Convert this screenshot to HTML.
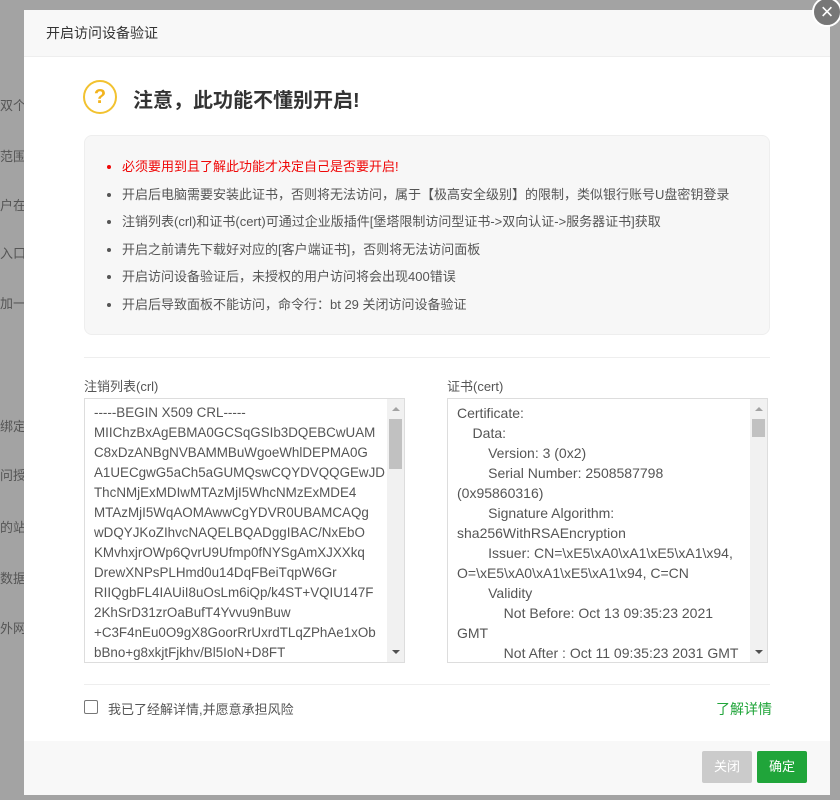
<!DOCTYPE html>
<html><head><meta charset="utf-8"><style>
*{margin:0;padding:0;box-sizing:border-box}
body{width:840px;height:800px;background:#a3a3a3;position:relative;overflow:hidden;font-family:"Liberation Sans","Noto Sans CJK SC",sans-serif;color:#555}
.bg{position:absolute;left:0;font-size:13px;color:#555}
.dlg{position:absolute;left:24px;top:10px;width:806px;height:785px;background:#fff}
.hd{height:47px;background:#f8f8f8;border-bottom:1px solid #eee;font-size:14px;color:#333;padding-left:22px;line-height:47px}
.x{position:absolute;left:788px;top:-13px;width:30px;height:30px;border-radius:50%;background:#777;border:2px solid #fff;color:#fff;font-size:22px;line-height:25px;text-align:center}
.ic{position:absolute;left:59px;top:70px;width:34px;height:34px;border:2px solid #f2c230;border-radius:50%;color:#f2b31c;font-size:20px;font-weight:bold;text-align:center;line-height:30px}
.h2{position:absolute;left:109px;top:74px;font-size:20px;font-weight:bold;color:#333}
.box{position:absolute;left:60px;top:125px;width:686px;height:200px;background:#f7f7f7;border:1px solid #eee;border-radius:8px}
.box ul{list-style:none;padding-top:20px}
.box li{position:relative;padding-left:37px;height:27.5px;font-size:13px;line-height:21px;color:#555}
.box li:before{content:"";position:absolute;left:22px;top:9px;width:4px;height:4px;border-radius:50%;background:#555}
.box li.r{color:#ef0808}.box li.r:before{background:#ef0808}
.hr{position:absolute;left:60px;width:686px;height:1px;background:#eee}
.lb{position:absolute;top:366px;font-size:13px;color:#555}
.ta{position:absolute;top:388px;width:321px;height:265px;border:1px solid #ddd;font-size:14px;line-height:20px;color:#555;padding:4px 0 0 9px;overflow:hidden;white-space:pre}
.sb{position:absolute;right:0;top:0;width:17px;height:100%;background:#f1f1f1}
.th{position:absolute;right:2px;top:20px;width:13px;height:50px;background:#c1c1c1}
.up,.dn{position:absolute;right:4px;width:0;height:0;border-left:4px solid transparent;border-right:4px solid transparent}
.up{top:8px;border-bottom:4px solid #a3a3a3}.dn{bottom:8px;border-top:4px solid #505050}
.cb{position:absolute;left:60px;top:690px;width:14px;height:14px;border:1px solid #777;border-radius:2px}
.ft{position:absolute;left:0;top:731px;width:806px;height:54px;background:#f8f8f8}
.bt{position:absolute;top:10px;width:50px;height:32px;border-radius:2px;color:#fff;font-size:13px;text-align:center;line-height:32px}
</style></head><body>
<div class="bg" style="top:95px">双个站</div>
<div class="bg" style="top:146px">范围</div>
<div class="bg" style="top:195px">户在</div>
<div class="bg" style="top:243px">入口</div>
<div class="bg" style="top:293px">加一</div>
<div class="bg" style="top:416px">绑定一</div>
<div class="bg" style="top:465px">问授权</div>
<div class="bg" style="top:517px">的站点</div>
<div class="bg" style="top:568px">数据库</div>
<div class="bg" style="top:618px">外网I</div>
<div class="dlg">
<div class="hd">开启访问设备验证</div>
<div class="x">×</div>
<div class="ic">?</div>
<div class="h2">注意，此功能不懂别开启!</div>
<div class="box"><ul>
<li class="r">必须要用到且了解此功能才决定自己是否要开启!</li>
<li>开启后电脑需要安装此证书，否则将无法访问，属于【极高安全级别】的限制，类似银行账号U盘密钥登录</li>
<li>注销列表(crl)和证书(cert)可通过企业版插件[堡塔限制访问型证书->双向认证->服务器证书]获取</li>
<li>开启之前请先下载好对应的[客户端证书]，否则将无法访问面板</li>
<li>开启访问设备验证后，未授权的用户访问将会出现400错误</li>
<li>开启后导致面板不能访问，命令行：bt 29 关闭访问设备验证</li>
</ul></div>
<div class="hr" style="top:347px"></div>
<div class="lb" style="left:60px">注销列表(crl)</div>
<div class="lb" style="left:423px">证书(cert)</div>
<div class="ta" style="left:60px;font-size:13.4px">-----BEGIN X509 CRL-----
MIIChzBxAgEBMA0GCSqGSIb3DQEBCwUAM
C8xDzANBgNVBAMMBuWgoeWhlDEPMA0G
A1UECgwG5aCh5aGUMQswCQYDVQQGEwJD
ThcNMjExMDIwMTAzMjI5WhcNMzExMDE4
MTAzMjI5WqAOMAwwCgYDVR0UBAMCAQg
wDQYJKoZIhvcNAQELBQADggIBAC/NxEbO
KMvhxjrOWp6QvrU9Ufmp0fNYSgAmXJXXkq
DrewXNPsPLHmd0u14DqFBeiTqpW6Gr
RIIQgbFL4IAUiI8uOsLm6iQp/k4ST+VQIU147F
2KhSrD31zrOaBufT4Yvvu9nBuw
+C3F4nEu0O9gX8GoorRrUxrdTLqZPhAe1xOb
bBno+g8xkjtFjkhv/Bl5IoN+D8FT<div class="sb"><div class="up"></div><div class="th"></div><div class="dn"></div></div></div>
<div class="ta" style="left:423px">Certificate:
    Data:
        Version: 3 (0x2)
        Serial Number: 2508587798
(0x95860316)
        Signature Algorithm:
sha256WithRSAEncryption
        Issuer: CN=\xE5\xA0\xA1\xE5\xA1\x94,
O=\xE5\xA0\xA1\xE5\xA1\x94, C=CN
        Validity
            Not Before: Oct 13 09:35:23 2021
GMT
            Not After : Oct 11 09:35:23 2031 GMT<div class="sb"><div class="up"></div><div class="th" style="height:18px"></div><div class="dn"></div></div></div>
<div class="hr" style="top:674px"></div>
<div class="cb"></div>
<div style="position:absolute;left:84px;top:689px;font-size:13px;color:#555">我已了经解详情,并愿意承担风险</div>
<div style="position:absolute;left:692px;top:689px;font-size:14px;color:#20a53a">了解详情</div>
<div class="ft">
<div class="bt" style="left:678px;background:#cbcbcb">关闭</div>
<div class="bt" style="left:733px;background:#20a53a">确定</div>
</div>
</div>
</body></html>
